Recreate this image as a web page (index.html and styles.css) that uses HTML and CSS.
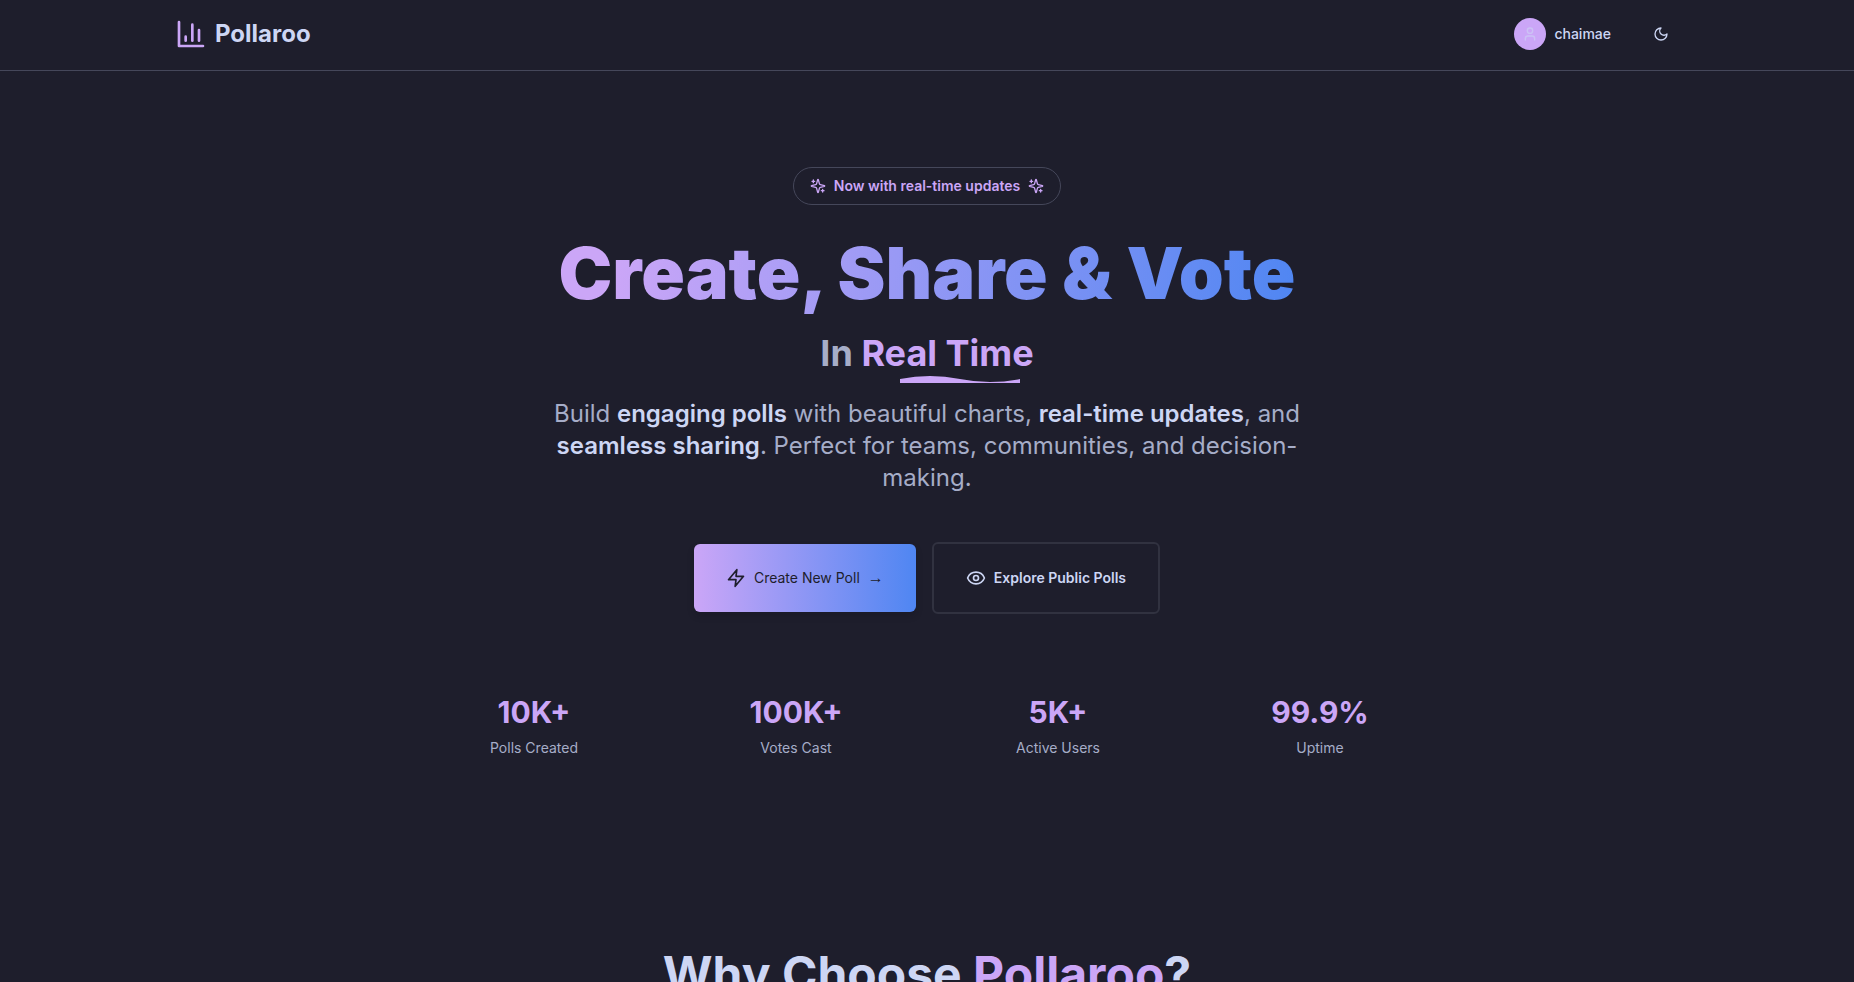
FILE: index.html
```html
<!DOCTYPE html>
<html lang="en">
<head>
<meta charset="utf-8">
<meta name="viewport" content="width=device-width, initial-scale=1">
<title>Pollaroo</title>
<link rel="stylesheet" href="styles.css">
</head>
<body>
<header class="site-header">
  <div class="header-inner">
    <a class="brand" href="#">
      <svg class="icon brand-icon" viewBox="0 0 24 24" aria-hidden="true"><path d="M3 3v18h18M8 17v-3M13 17V5M18 17V9"/></svg>
      <span>Pollaroo</span>
    </a>
    <div class="header-actions">
      <button class="user-button" type="button">
        <span class="avatar"><svg class="icon icon-sm" viewBox="0 0 24 24" aria-hidden="true"><path d="M19 21v-2a4 4 0 0 0-4-4H9a4 4 0 0 0-4 4v2"/><circle cx="12" cy="7" r="4"/></svg></span>
        <span>chaimae</span>
      </button>
      <button class="theme-button" type="button" aria-label="Toggle theme">
        <svg class="icon icon-sm" viewBox="0 0 24 24" aria-hidden="true"><path d="M12 3a6 6 0 0 0 9 9 9 9 0 1 1-9-9Z"/></svg>
      </button>
    </div>
  </div>
</header>
<main>
  <section class="hero">
    <div class="badge">
      <svg class="icon icon-sm" viewBox="0 0 24 24" aria-hidden="true"><path d="M9.937 15.5A2 2 0 0 0 8.5 14.063l-6.135-1.582a.5.5 0 0 1 0-.962L8.5 9.936A2 2 0 0 0 9.937 8.5l1.582-6.135a.5.5 0 0 1 .963 0L14.063 8.5A2 2 0 0 0 15.5 9.937l6.135 1.581a.5.5 0 0 1 0 .964L15.5 14.063a2 2 0 0 0-1.437 1.437l-1.582 6.135a.5.5 0 0 1-.963 0zM5 3v4M3 5h4M19 17v4M17 19h4"/></svg>
      <span>Now with real-time updates</span>
      <svg class="icon icon-sm" viewBox="0 0 24 24" aria-hidden="true"><path d="M9.937 15.5A2 2 0 0 0 8.5 14.063l-6.135-1.582a.5.5 0 0 1 0-.962L8.5 9.936A2 2 0 0 0 9.937 8.5l1.582-6.135a.5.5 0 0 1 .963 0L14.063 8.5A2 2 0 0 0 15.5 9.937l6.135 1.581a.5.5 0 0 1 0 .964L15.5 14.063a2 2 0 0 0-1.437 1.437l-1.582 6.135a.5.5 0 0 1-.963 0zM5 3v4M3 5h4M19 17v4M17 19h4"/></svg>
    </div>
    <h1 class="hero-title">Create, Share &amp; Vote</h1>
    <p class="hero-subtitle">In <span class="accent underlined">Real Time<svg class="swoosh" viewBox="0 0 120 8" preserveAspectRatio="none" aria-hidden="true"><path d="M0 4Q30-2 60 4T120 4V8H0Z"/></svg></span></p>
    <p class="hero-text">Build <strong>engaging polls</strong> with beautiful charts, <strong>real-time updates</strong>, and <strong>seamless sharing</strong>. Perfect for teams, communities, and decision-making.</p>
    <div class="hero-actions">
      <a class="button button-primary" href="#">
        <svg class="icon icon-md" viewBox="0 0 24 24" aria-hidden="true"><path d="M13 2 3 14h9l-1 8 10-12h-9l1-8z"/></svg>
        <span>Create New Poll</span><span class="arrow">→</span>
      </a>
      <a class="button button-outline" href="#">
        <svg class="icon icon-md" viewBox="0 0 24 24" aria-hidden="true"><path d="M2.062 12.348a1 1 0 0 1 0-.696 10.75 10.75 0 0 1 19.876 0 1 1 0 0 1 0 .696 10.75 10.75 0 0 1-19.876 0"/><circle cx="12" cy="12" r="3"/></svg>
        <span>Explore Public Polls</span>
      </a>
    </div>
    <dl class="stats">
      <div class="stat"><dt>Polls Created</dt><dd>10K+</dd></div>
      <div class="stat"><dt>Votes Cast</dt><dd>100K+</dd></div>
      <div class="stat"><dt>Active Users</dt><dd>5K+</dd></div>
      <div class="stat"><dt>Uptime</dt><dd>99.9%</dd></div>
    </dl>
  </section>
  <section class="features">
    <h2 class="features-title">Why Choose <span class="accent">Pollaroo</span>?</h2>
  </section>
</main>
</body>
</html>
```
FILE: styles.css
```css
:root {
  --base: #1e1e2c;
  --text: #cdd6f4;
  --subtext: #a6adc8;
  --mauve: #cba6f7;
  --blue: #4f86f2;
  --line: #45475a;
  --outline: #313240;
}

* { box-sizing: border-box; }

body {
  margin: 0;
  height: 100vh;
  overflow: hidden;
  background: var(--base);
  color: var(--text);
  font: 16px/24px Inter, "Liberation Sans", sans-serif;
}

h1, h2, p, dl, dd { margin: 0; }
a { color: inherit; text-decoration: none; }

button {
  border: 0;
  background: none;
  color: inherit;
  font: inherit;
  cursor: pointer;
}

.icon {
  flex: none;
  fill: none;
  stroke: currentColor;
  stroke-width: 2;
  stroke-linecap: round;
  stroke-linejoin: round;
}
.icon-sm { width: 16px; height: 16px; }
.icon-md { width: 20px; height: 20px; }
.accent { color: var(--mauve); }

.site-header {
  border-bottom: 1px solid var(--line);
  padding: 14px 0 16px;
}
.header-inner {
  display: flex;
  align-items: center;
  justify-content: space-between;
  max-width: 1536px;
  margin: 0 auto;
  padding: 0 16px;
}
.brand {
  display: flex;
  align-items: center;
  gap: 8px;
  font-size: 24px;
  line-height: 32px;
  font-weight: 700;
}
.brand-icon { width: 32px; height: 32px; color: var(--mauve); }
.header-actions { display: flex; align-items: center; gap: 16px; }
.user-button {
  display: flex;
  align-items: center;
  gap: 8px;
  height: 40px;
  padding: 0 16px;
  font-size: 14px;
  line-height: 20px;
  font-weight: 500;
}
.avatar {
  display: grid;
  place-items: center;
  width: 32px;
  height: 32px;
  border-radius: 50%;
  background: var(--mauve);
}
.avatar .icon { opacity: 0.6; }
.theme-button {
  display: grid;
  place-items: center;
  width: 36px;
  height: 36px;
  padding: 0;
}

.hero {
  display: flex;
  flex-direction: column;
  align-items: center;
  padding: 96px 16px;
  text-align: center;
}
.badge {
  display: flex;
  align-items: center;
  gap: 8px;
  padding: 8px 16px;
  border: 1px solid var(--line);
  border-radius: 20px;
  color: var(--mauve);
  font-size: 14px;
  line-height: 20px;
  font-weight: 600;
}
.hero-title {
  margin-top: 32px;
  padding-bottom: 8px;
  background: linear-gradient(100deg, var(--mauve) 8%, var(--blue));
  background-clip: text;
  color: transparent;
  font-size: 72px;
  line-height: 72px;
  font-weight: 900;
}
.hero-subtitle {
  margin-top: 16px;
  color: var(--subtext);
  font-size: 36px;
  line-height: 40px;
  font-weight: 700;
}
.underlined { position: relative; }
.swoosh {
  position: absolute;
  right: 14px;
  bottom: -8px;
  width: 120px;
  height: 8px;
  fill: var(--mauve);
}
.hero-text {
  max-width: 768px;
  margin-top: 25px;
  color: var(--subtext);
  font-size: 24px;
  line-height: 32px;
}
.hero-text strong { color: var(--text); font-weight: 600; }
.hero-actions {
  display: flex;
  align-items: center;
  gap: 16px;
  margin-top: 48px;
}
.button {
  display: flex;
  align-items: center;
  gap: 8px;
  padding: 24px 32px;
  border-radius: 6px;
  font-size: 14px;
  line-height: 20px;
}
.button-primary {
  background: linear-gradient(to right, var(--mauve), var(--blue));
  color: var(--base);
  box-shadow: 0 4px 6px #11111b40;
}
.arrow { font-family: "Liberation Sans", sans-serif; font-size: 16px; }
.button-outline { border: 2px solid var(--outline); font-weight: 600; }
.stats {
  display: grid;
  grid-template-columns: repeat(4, 1fr);
  gap: 24px;
  width: 100%;
  max-width: 1024px;
  margin-top: 80px;
}
.stat { display: flex; flex-direction: column-reverse; gap: 8px; }
.stat dt { color: var(--subtext); font-size: 14px; line-height: 20px; }
.stat dd { color: var(--mauve); font-size: 30px; line-height: 36px; font-weight: 700; }

.features { padding: 96px 16px; text-align: center; }
.features-title { font-size: 48px; line-height: 48px; font-weight: 700; }
```
